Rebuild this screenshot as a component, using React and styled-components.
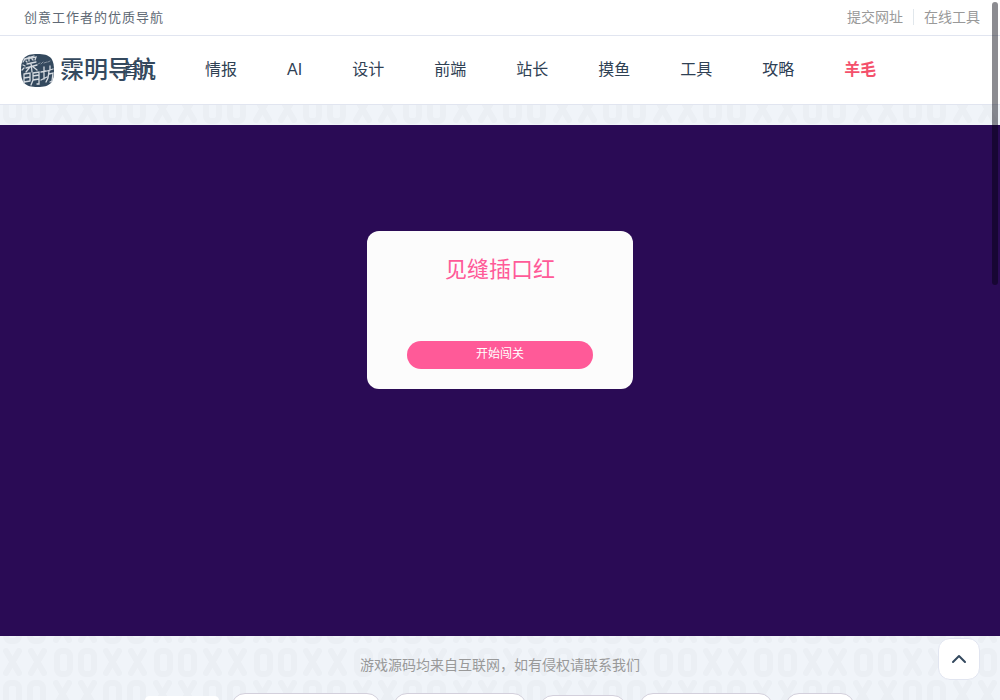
import React from 'react'
import styled, { createGlobalStyle, css } from 'styled-components'
import { ChevronUp } from 'lucide-react'


const tile = `<svg xmlns="http://www.w3.org/2000/svg" width="100" height="65" fill="none" stroke="#ebeff4" stroke-width="6" stroke-linecap="round">
<path d="M6 4L19 26M19 4L6 26M31 4L44 26M44 4L31 26M56 36L69 58M69 36L56 58M81 36L94 58M94 36L81 58"/>
<rect x="57" y="4" width="13" height="23" rx="5"/><rect x="81" y="4" width="13" height="23" rx="5"/>
<rect x="6" y="36" width="13" height="23" rx="5"/><rect x="30" y="36" width="13" height="23" rx="5"/></svg>`;

const GlobalStyle = createGlobalStyle`
    * {
        box-sizing: border-box;
    }
    body {
        margin: 0;
        overflow: hidden;
        font-family: "Liberation Sans", "Noto Sans CJK SC", sans-serif;
        color: #2f4154;
    }
    a {
        color: inherit;
        text-decoration: none;
    }
`;

const Page = styled.div`
    display: flex;
    flex-direction: column;
    height: 100vh;
    overflow: hidden;
    background: #f0f4f9 url("data:image/svg+xml,${encodeURIComponent(tile)}") 0 -3px;
`;

const TopBar = styled.div`
    display: flex;
    flex-shrink: 0;
    align-items: center;
    justify-content: space-between;
    height: 36px;
    padding: 0 20px 2px 24px;
    background: white;
    border-bottom: 1px solid #e1e5f0;
`;

const Slogan = styled.span`
    font-size: 13px;
    letter-spacing: 1px;
    color: #606975;
`;

const TopLinks = styled.div`
    display: flex;
    align-items: center;
    font-size: 14px;
    line-height: 16px;
    color: #999;
    a + a {
        margin-left: 10px;
        padding-left: 10px;
        border-left: 1px solid #e1e7ec;
    }
`;

const Header = styled.header`
    position: relative;
    display: flex;
    flex-shrink: 0;
    align-items: center;
    height: 69px;
    padding-left: 98px;
    background: white;
    border-bottom: 1px solid #e1e5f0;
`;

const Logo = styled.a`
    position: absolute;
    left: 20px;
    top: 16px;
    display: flex;
    align-items: center;
    gap: 5px;
    height: 36px;
    font-size: 24px;
    font-weight: 500;
    line-height: 32px;
    color: #34495e;
    white-space: nowrap;
`;

const Nav = styled.nav`
    display: flex;
`;

const NavLink = styled.a`
    padding: 0 25px;
    font-size: 16px;
    line-height: 24px;
    white-space: nowrap;
    ${p => p.$hot && css`
        color: #f4516c;
        font-weight: bold;
    `}
`;

const Strip = styled.div`
    flex-shrink: 0;
    height: 20px;
    background: #f0f4f9 url("data:image/svg+xml,${encodeURIComponent(tile)}") 0 -43px;
`;

const Stage = styled.main`
    flex-shrink: 0;
    height: 511px;
    padding-top: 106px;
    background: #2a0b55;
`;

const StartCard = styled.section`
    width: 266px;
    height: 158px;
    margin: 0 auto;
    padding: 20px 40px;
    display: flex;
    flex-direction: column;
    justify-content: space-between;
    background: #fcfcfc;
    border-radius: 12px;
    text-align: center;
`;

const Title = styled.h1`
    margin: 0;
    font-size: 22px;
    font-weight: normal;
    line-height: 38px;
    color: #ff5a98;
`;

const StartButton = styled.button`
    height: 28px;
    padding: 0 0 6px;
    border: 0;
    border-radius: 14px;
    background: #ff5a98;
    color: white;
    font-family: inherit;
    font-size: 12px;
`;

const Notice = styled.p`
    margin: 18px 0 16px;
    font-size: 14px;
    line-height: 23px;
    text-align: center;
    color: #999;
`;

const Tags = styled.div`
    display: flex;
    flex-shrink: 0;
    justify-content: center;
    align-items: center;
    gap: 12px;
`;

const Tag = styled.span`
    width: ${p => p.$width}px;
    height: ${p => p.$height || 38}px;
    background: white;
    border: 1px solid ${p => p.$plain ? 'white' : '#d3d0dc'};
    border-radius: ${p => p.$plain ? 4 : 14}px;
`;

const ToTop = styled.button`
    position: fixed;
    right: 20px;
    bottom: 20px;
    display: flex;
    align-items: center;
    justify-content: center;
    width: 42px;
    height: 42px;
    padding: 0;
    border: 1px solid #e1e5f0;
    border-radius: 12px;
    background: white;
    color: #34495e;
`;

const ScrollThumb = styled.div`
    position: fixed;
    top: 2px;
    right: 2px;
    width: 6px;
    height: 283px;
    border-radius: 3px;
    background: rgba(0, 0, 10, 0.45);
`;

const links = ['首页', '情报', 'AI', '设计', '前端', '站长', '摸鱼', '工具', '攻略', '羊毛']

const tags = [
    {width: 74, height: 32, plain: true},
    {width: 150},
    {width: 134},
    {width: 88, height: 34},
    {width: 134},
    {width: 70},
]

const Seal = () => (
    <svg width="35" height="35" viewBox="0 0 35 35" fill="none" aria-hidden="true">
        <path d="M17.500 1C30 1 34 5 34 17.500S30 34 17.500 34 1 30 1 17.500 5 1 17.500 1Z" fill="#34495e"/>
        <g stroke="#d5dae0" strokeWidth="1.300" strokeLinecap="round">
            <path d="M4 6L14 3M3 9L5 6L16 4L15 7M9 4V8M6 8L7 9M12 6L13 7M3 12L5 13M2 17L4 15M7 11L16 9M6 15L17 12M11 10L12 19M10 14L6 19M12 13L17 17"/>
            <path d="M4 21L4 30M4 21L10 20L10 28M4 25L10 24M4 29L10 28M13 20L13 27L11 32M13 20L19 19L19 31L17 31M13 23L19 22M13 27L19 26"/>
            <path d="M21 19L26 18M24 14L24 26M21 27L27 24M27 18L33 16M30 13L30 17M29 18L28 25L26 29M29 21L33 20L32 28L30 29"/>
            <path d="M18 11L20 10M21 11L23 9M24 10L27 9M28 9L30 8" strokeWidth="1" opacity="0.500"/>
        </g>
    </svg>
)

export default function App() {
    return (
        <Page>
            <GlobalStyle />
            <TopBar>
                <Slogan>创意工作者的优质导航</Slogan>
                <TopLinks>
                    <a href="#submit">提交网址</a>
                    <a href="#tools">在线工具</a>
                </TopLinks>
            </TopBar>
            <Header>
                <Logo href="#home">
                    <Seal />
                    霂明导航
                </Logo>
                <Nav>
                    {links.map(name => (
                        <NavLink key={name} href={'#' + name} $hot={name === '羊毛'}>{name}</NavLink>
                    ))}
                </Nav>
            </Header>
            <Strip />
            <Stage>
                <StartCard>
                    <Title>见缝插口红</Title>
                    <StartButton type="button">开始闯关</StartButton>
                </StartCard>
            </Stage>
            <Notice>游戏源码均来自互联网，如有侵权请联系我们</Notice>
            <Tags>
                {tags.map((t, i) => (
                    <Tag key={i} $width={t.width} $height={t.height} $plain={t.plain} />
                ))}
            </Tags>
            <ToTop type="button" aria-label="返回顶部">
                <ChevronUp size={24} />
            </ToTop>
            <ScrollThumb />
        </Page>
    )
}
